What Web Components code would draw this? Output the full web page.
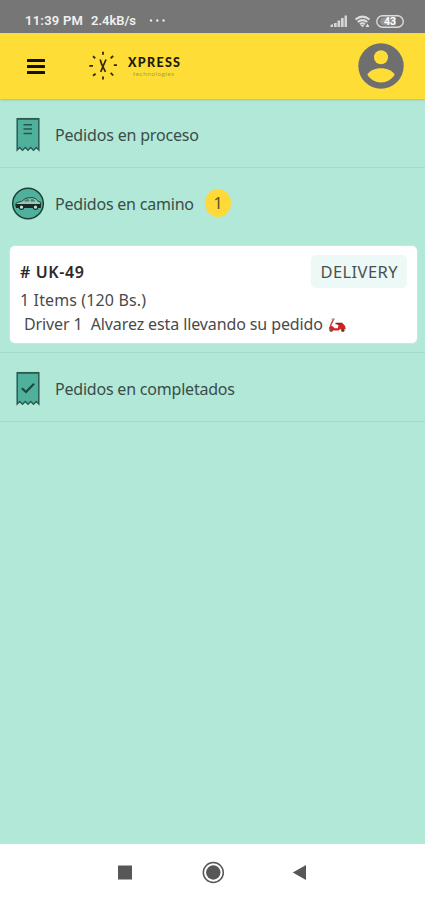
<!DOCTYPE html>
<html lang="es">
<head>
<meta charset="utf-8">
<title>Xpress – Pedidos</title>
<style>
html,body{margin:0;height:100%}
body{font-family:"Noto Sans","Open Sans",sans-serif;color:#3a4d48;background:#b2e8d8;overflow:hidden}
</style>
</head>
<body>
<order-app></order-app>
<script>
const define = (name, html, setup) => {
  const tpl = document.createElement('template');
  tpl.innerHTML = html;
  customElements.define(name, class extends HTMLElement {
    constructor() {
      super();
      this.attachShadow({mode: 'open'}).append(tpl.content.cloneNode(true));
    }
    connectedCallback() { if (setup) setup(this); }
  });
};

/* One line of text, tracked so that it spans the width given in its "w" attribute. */
define('fit-text', `<style>:host{display:inline-block;white-space:pre}span{display:inline-block}</style><span><slot></slot></span>`, el => {
  const span = el.shadowRoot.querySelector('span');
  const w = +el.getAttribute('w');
  const n = el.textContent.length;
  const natural = span.getBoundingClientRect().width;
  el.style.width = w + 'px';
  span.style.letterSpacing = ((w - natural) / (n - 1)) + 'px';
});

define('status-bar', `<style>
:host{display:flex;align-items:center;height:33px;box-sizing:border-box;padding:9px 20px 0 25px;background:#767676;color:#f0f0f0;font:600 13px/24px Roboto,sans-serif}
.speed{margin-left:8px}.dots{margin-left:13px}
.right{margin-left:auto;display:flex;align-items:center}
svg{display:block}
</style>
<fit-text w="58">11:39 PM</fit-text><fit-text class="speed" w="45">2.4kB/s</fit-text>
<svg class="dots" width="17" height="4"><g fill="#e8e8e8"><circle cx="2" cy="1.5" r="1.2"/><circle cx="8.3" cy="1.5" r="1.2"/><circle cx="14.6" cy="1.5" r="1.2"/></g></svg>
<div class="right">
<svg width="75" height="16" viewBox="0 0 75 16">
<g fill="#d4d4d4"><path d="M.5 14V12L3 11V14zM4 14V10H6.700V14zM7.500 14V7.500H10.200V14zM11 14V5H13.700V14zM14.500 14V2.500H17V14z"/></g>
<g fill="none" stroke="#dedede" stroke-width="2"><path d="M25.5 6.5Q32.5.8 39.5 6.5M27.7 9Q32.5 5.2 37.3 9M30 11.2Q32.5 9.5 35 11.2"/></g>
<path d="M30.5 12L32.5 14.2L34.5 12zM37.5 10.5L39.5 14H35.5z" fill="#dedede"/>
<rect x="46.8" y="2.7" width="26.5" height="11.600" rx="5.8" fill="none" stroke="#dcdcdc" stroke-width="1.4"/>
<path d="M54 4.500H66V12.500H54Q50 12 50 8.500T54 4.500" fill="#949494"/>
<text x="60" y="12.300" text-anchor="middle" font-family="Roboto,sans-serif" font-weight="700" font-size="10.500" fill="#fff">43</text>
</svg></div>`);

define('brand-logo', `<style>
:host{display:flex;align-items:center;color:#26230c}
.words{display:flex;flex-direction:column;margin-left:10px;padding-top:1px}
.name{font:900 12.5px/14px Lato,sans-serif;color:#1b1908}
.sub{font:400 6.5px/8px Lato,sans-serif;color:#b59d2e;margin-left:5px}
</style>
<svg width="30" height="30" viewBox="0 0 30 30" fill="none" stroke="#2d290d" stroke-width="1.8">
<path d="M15 .8V3.800M15 25.500V28.500M1.300 14.800H5M25.800 14.200H29"/><path d="M5 5.300L7.200 7.200M22.600 7.200L25.200 5M5 24.700L7.600 22.700M22.700 21.800L25.200 24.500"/>
<path d="M12.200 8.500L13.600 13.200L17.500 20.800M18 8.500L15.200 15L12.700 20.800" stroke-width="1.700"/></svg>
<div class="words"><fit-text class="name" w="52">XPRESS</fit-text><fit-text class="sub" w="41">technologies</fit-text></div>`);

define('app-header', `<style>
:host{display:flex;align-items:center;height:66px;box-sizing:border-box;padding:0 21px 0 27px;background:#fedd37;box-shadow:0 1px 2px #8a9a5a88;position:relative}
brand-logo{margin-left:43px}.avatar{margin-left:auto}svg{display:block}.menu{margin-top:2px}
</style>
<svg class="menu" width="18" height="16" fill="#111"><rect y="0" width="18" height="3" rx=".6"/><rect y="6" width="18" height="3" rx=".6"/><rect y="12" width="18" height="3" rx=".6"/></svg>
<brand-logo></brand-logo>
<svg class="avatar" width="46" height="46" viewBox="0 0 46 46"><circle cx="23" cy="23" r="22.700" fill="#706f70"/><circle cx="23" cy="14.200" r="7" fill="#fedd37"/><path d="M9.300 31.800C11.500 27.500 17 25.300 23 25.300S34.500 27.500 36.700 31.800C33.500 36.700 28.500 39.500 23 39.500S12.500 36.700 9.300 31.800z" fill="#fedd37"/></svg>`);

const receipt = '<path d="M5.200 1.800H26.800V33L24.300 30.500L21.500 33.200L18.700 30.500L16 33.200L13.300 30.500L10.500 33.200L7.700 30.500L5.200 33z" fill="#4fb09b" stroke="#2d5b52" stroke-width="1.500"/><path d="M5 1.800H27" stroke="#2d5b52" stroke-width="1.700"/>';
const icons = {
  receipt: receipt + '<path d="M11.500 7.800H20M11.500 12H20M11.500 16.500H20" stroke="#26554c" stroke-width="1.500"/>',
  done: receipt + '<path d="M9.800 17.200L14 21L22 12.800" fill="none" stroke="#20473f" stroke-width="2.100"/>',
  car: `<circle cx="16" cy="17.500" r="15.300" fill="#4fb09b" stroke="#1f4039" stroke-width="1.500"/>
<path d="M3.800 17.500Q6 15.800 9.500 15.500L13 12.700Q15 11.500 21 11.700Q23.500 12 25.800 15L28.600 16.300L28.500 21H4z" fill="#97c9b9" stroke="#233e37" stroke-width="1"/>
<path d="M4 18H28.700V22H4z" fill="#182b26"/>
<path d="M11.500 15.500L14 13.200H17.200V15.500zM18.500 13.200H21.500L23.500 15.500H18.500z" fill="#477d6d"/>
<g fill="#c4ded4" stroke="#182b26" stroke-width="1.100"><circle cx="9.500" cy="21.200" r="2.200"/><circle cx="23.500" cy="21.200" r="2.200"/></g>`
};
define('order-row', `<style>
:host{display:flex;align-items:center;box-sizing:border-box;height:68px;padding:2px 12px 0;font-size:16px;line-height:24px}
.icon{width:32px;height:35px;margin-right:11px;flex:none}
slot:not([name]){display:block;padding-top:1px}
</style><svg class="icon" viewBox="0 0 32 35"></svg><slot></slot><slot name="badge"></slot>`, el => {
  el.shadowRoot.querySelector('svg').innerHTML = icons[el.getAttribute('icon')];
});

define('count-badge', `<style>
:host{display:grid;place-items:center;width:26px;height:28px;border-radius:50%;background:#fed938;margin-left:11px;font-size:16px;line-height:20px;color:#5a5228}
</style><slot></slot>`);

/* Small delivery scooter. */
define('scooter-icon', `<style>:host{display:inline-block;margin:4px 0 0 5px}svg{display:block}</style>
<svg width="19" height="15" viewBox="0 0 19 15"><path d="M5.500 1.200L3.200 6L1.500 11.500" fill="none" stroke="#bd433e" stroke-width="1.500"/><path d="M3.500 1H7" stroke="#a58583" stroke-width="1"/><path d="M1 10Q3 7 5 8.500L6.500 10.300H9.800L10.500 7.500L8.500 5.700Q11.500 4.500 15.500 6Q18 8 17.800 11.200H12L10.500 12.500H4.500L3 11z" fill="#d9211f"/><path d="M7.500 5.600L14.500 5.500" stroke="#792b27" stroke-width="1.500"/><circle cx="3.200" cy="12.200" r="1.700" fill="#77504b"/><circle cx="14.800" cy="12.200" r="1.700" fill="#653c38"/></svg>`);

define('order-card', `<style>
:host{display:flex;flex-direction:column;box-sizing:border-box;height:97px;margin:10px 8px 0 10px;padding:9px 10px 0;border-radius:5px;background:#fff;box-shadow:0 0 2px #dff5ee;font-size:16px;color:#4a4a4a}
.top{display:flex;justify-content:space-between;align-items:center;height:33px}
.id{font-weight:600;color:#2a2a2a}
.tag{display:grid;place-items:center;width:96px;height:33px;border-radius:5px;background:#edf9f6;color:#4a504e;font-size:16.5px}
.line{display:flex;align-items:center;height:24px;line-height:24px}
.driver{padding-left:4px;height:23px}
</style>
<div class="top"><div class="id"><slot name="id"></slot></div><div class="tag"><slot name="tag"></slot></div></div>
<div class="line"><slot name="items"></slot></div>
<div class="line driver"><slot name="driver"></slot><scooter-icon></scooter-icon></div>`);

define('nav-bar', `<style>
:host{display:flex;align-items:center;height:56px;box-sizing:border-box;padding:1px 117px 0 117px;justify-content:space-between;background:#fff}
svg{display:block}
</style>
<svg width="16" height="16"><rect x="1" y=".5" width="14" height="14" fill="#575757"/></svg>
<svg width="24" height="24"><circle cx="12.300" cy="11.500" r="10" fill="none" stroke="#575757" stroke-width="1.500"/><circle cx="12.300" cy="11.500" r="7.200" fill="#575757"/></svg>
<svg width="16" height="16"><path d="M.8 7.500L14 0V15z" fill="#575757"/></svg>`);

define('order-app', `<style>
:host{display:flex;flex-direction:column;height:900px}
main{flex:1;background:#b2e8d8}
section{border-bottom:1px solid #a7d9cb;box-sizing:border-box}
.active{padding-bottom:9px}
</style>
<status-bar></status-bar><app-header></app-header>
<main>
<section><order-row icon="receipt"><fit-text w="144">Pedidos en proceso</fit-text></order-row></section>
<section class="active">
<order-row icon="car"><fit-text w="139">Pedidos en camino</fit-text><count-badge slot="badge">1</count-badge></order-row>
<order-card><fit-text slot="id" w="64"># UK-49</fit-text><fit-text slot="tag" w="77">DELIVERY</fit-text><fit-text slot="items" w="126">1 Items (120 Bs.)</fit-text><fit-text slot="driver" w="299">Driver 1  Alvarez esta llevando su pedido</fit-text></order-card>
</section>
<section><order-row icon="done"><fit-text w="180">Pedidos en completados</fit-text></order-row></section>
</main>
<nav-bar></nav-bar>`);
</script>
</body>
</html>
